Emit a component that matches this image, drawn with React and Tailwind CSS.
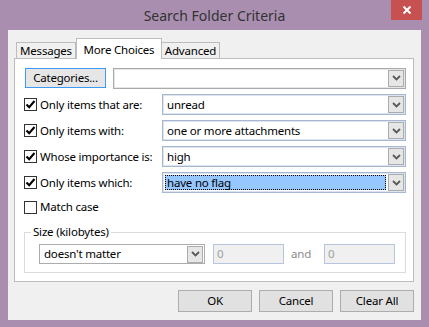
const font = "font-['Segoe_UI','Noto_Sans',sans-serif]"

function Chevron() {
  return (
    <svg width="9" height="6" viewBox="0 0 9 6" className="block">
      <path d="M1 1 L4.5 4.5 L8 1" fill="none" stroke="#5a5a5a" strokeWidth="1.8" />
    </svg>
  )
}

function DropButton({ className = '' }) {
  return (
    <div className={`flex h-[17px] w-[16px] items-center justify-center border border-[#acacac] bg-[#e6e6e6] ${className}`}>
      <Chevron />
    </div>
  )
}

function Combo({ value, width, highlight }) {
  return (
    <div
      className={`flex h-[21px] items-center border border-[#a6b7cf] bg-white shadow-[inset_0_0_0_1px_#dbe4ef] ${width}`}
    >
      <div className="flex h-full flex-1 items-center p-[2px]">
        {highlight ? (
          <div className="flex h-full w-full items-center border border-dotted border-black bg-[#97c7ff] pl-[1px]">
            {value}
          </div>
        ) : (
          <div className="pl-[2px]">{value}</div>
        )}
      </div>
      <DropButton className="mr-[1px]" />
    </div>
  )
}

function Check({ checked }) {
  return (
    <div className="flex h-[13px] w-[13px] shrink-0 items-center justify-center border border-[#333333] bg-white">
      {checked && (
        <svg width="11" height="11" viewBox="0 0 11 11" className="block">
          <path d="M1.5 5.5 L4.2 8.3 L9.5 2" fill="none" stroke="#000" strokeWidth="2.1" />
        </svg>
      )}
    </div>
  )
}

function Row({ label, value, highlight }) {
  return (
    <div className="flex h-[21px] items-center">
      <div className="flex w-[138px] items-center gap-[3px]">
        <Check checked />
        <span>{label}</span>
      </div>
      <Combo value={value} width="w-[244px]" highlight={highlight} />
    </div>
  )
}

function Button({ children }) {
  return (
    <div className="flex h-[22px] w-[74px] items-center justify-center border border-[#adadad] bg-[#e1e1e1]">
      {children}
    </div>
  )
}

export default function App() {
  return (
    <div className={`${font} flex h-[327px] w-[429px] flex-col bg-[#a98eb0] text-[11.5px] tracking-[-0.2px] text-black`}>
      <div className="flex h-[30px] shrink-0 items-start">
        <div className="w-[38px]" />
        <div className="flex h-[30px] flex-1 items-center justify-center text-[14px] tracking-normal text-[#333333]">
          Search Folder Criteria
        </div>
        <div className="mr-[7px] flex h-[20px] w-[31px] items-center justify-center bg-[#c75050]">
          <svg width="10" height="10" viewBox="0 0 10 10" className="block">
            <path d="M1.5 1.5 L8.5 8.5 M8.5 1.5 L1.5 8.5" stroke="#fff" strokeWidth="2" />
          </svg>
        </div>
      </div>

      <div className="mx-[8px] flex h-[290px] flex-col bg-[#f0f0f0]">
        <div className="ml-[6px] mt-[8px] flex w-[400px] flex-col">
          <div className="flex h-[20px] items-end pl-[2px]">
            <div className="flex h-[16px] w-[60px] items-center justify-center border border-b-0 border-[#bcbcbc] bg-[#f0f0f0] pt-[1px]">
              Messages
            </div>
            <div className="relative z-10 mb-[-1px] flex h-[21px] w-[86px] items-start justify-center border border-b-0 border-[#bcbcbc] bg-white pt-[2px]">
              More Choices
            </div>
            <div className="flex h-[16px] w-[58px] items-center justify-center border border-b-0 border-l-0 border-[#bcbcbc] bg-[#f0f0f0] pt-[1px]">
              Advanced
            </div>
          </div>

          <div className="flex h-[224px] flex-col border border-[#bcbcbc] bg-white pl-[9px] pt-[9px]">
            <div className="flex h-[20px] items-center">
              <div className="ml-[1px] flex h-[20px] w-[81px] items-center justify-center border border-[#3c99f4] bg-[#e6e6e6]">
                Categories...
              </div>
              <div className="ml-[7px] flex h-[21px] w-[293px] items-center justify-end border border-[#aaaaaa] bg-white shadow-[inset_0_0_0_1px_#e6e6e6]">
                <DropButton className="mr-[1px]" />
              </div>
            </div>

            <div className="mt-[6px] flex flex-col gap-[5px]">
              <Row label="Only items that are:" value="unread" />
              <Row label="Only items with:" value="one or more attachments" />
              <Row label="Whose importance is:" value="high" />
              <Row label="Only items which:" value="have no flag" highlight />
            </div>

            <div className="mt-[6px] flex h-[16px] items-center gap-[3px]">
              <Check />
              <span>Match case</span>
            </div>

            <fieldset className="mt-[9px] w-[382px] border border-[#dcdcdc] pb-[8px] pl-[6px]">
              <legend className="px-[2px] leading-[16px]">Size (kilobytes)</legend>
              <div className="mt-[4px] flex items-center pl-[8px]">
                <div className="flex h-[20px] w-[166px] items-center justify-between border border-[#acacac] bg-white pl-[4px]">
                  <span>doesn't matter</span>
                  <DropButton className="mr-[1px] h-[16px]" />
                </div>
                <div className="ml-[8px] flex h-[20px] w-[71px] items-center border border-[#b5c6dc] bg-[#f0f0f0] pl-[3px] text-[#a0a0a0]">
                  0
                </div>
                <span className="ml-[7px] w-[33px] text-[#8c8c8c]">and</span>
                <div className="flex h-[20px] w-[71px] items-center border border-[#b5c6dc] bg-[#f0f0f0] pl-[3px] text-[#a0a0a0]">
                  0
                </div>
              </div>
            </fieldset>
          </div>
        </div>

        <div className="mr-[7px] mt-[8px] flex justify-end gap-[7px]">
          <Button>OK</Button>
          <Button>Cancel</Button>
          <Button>Clear All</Button>
        </div>
      </div>
    </div>
  )
}
